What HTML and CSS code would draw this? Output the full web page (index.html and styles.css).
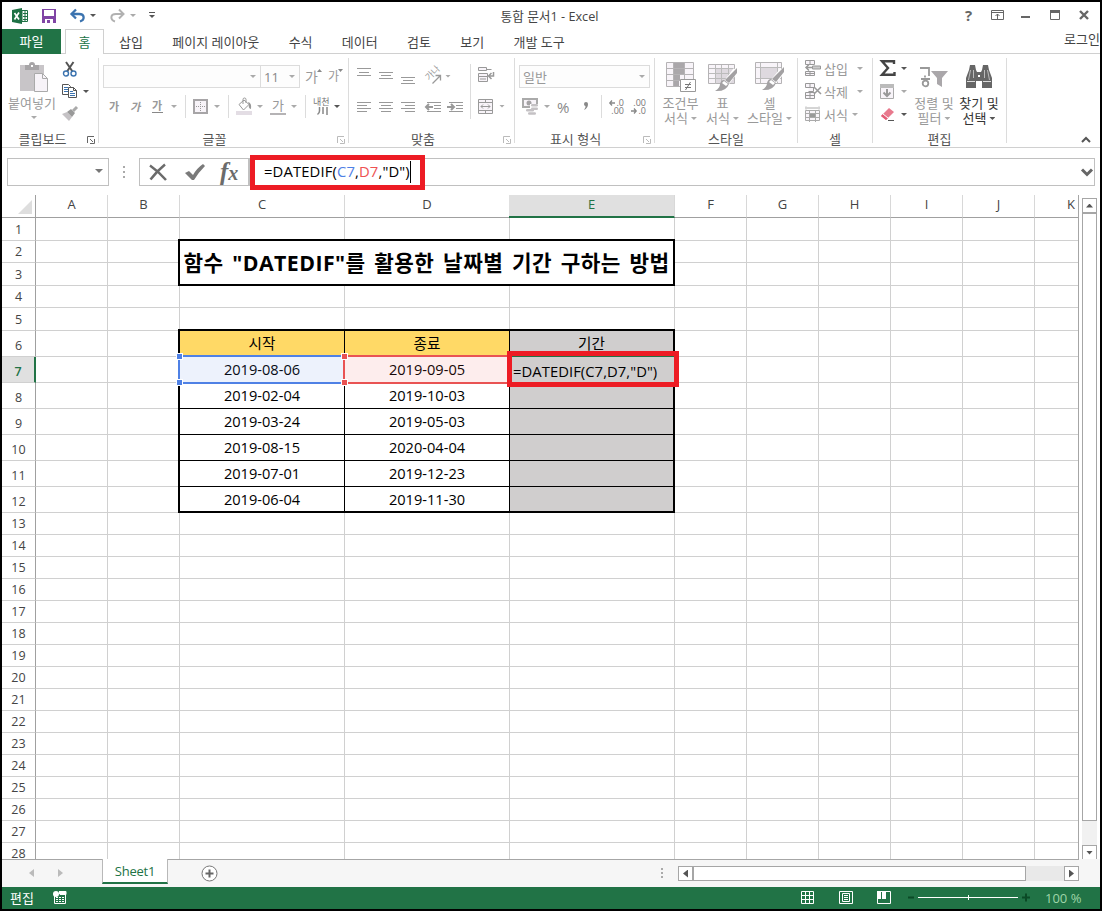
FILE: index.html
```
<!DOCTYPE html>
<html lang="ko">
<head>
    <meta charset="UTF-8">
    <meta name="viewport" content="width=device-width, initial-scale=1.0">
    <title>통합 문서1 - Excel</title>
    <link rel="stylesheet" href="styles.css">
</head>
<body>
    <div class="window">
        <!-- Title bar -->
        <header class="titlebar">
            <div class="quick-access">
                <svg width="16" height="16"><path d="M0 2L10 0V16L0 14Z" fill="#1e7145"/><path d="M10 2.500h5.500v11h-5.500z" fill="#fff" stroke="#1e7145"/><path d="M11 5.500h4M11 8.500h4M11 11.500h4M13 3v10" stroke="#1e7145"/><path d="M2.500 5L7 11.500M7 4.500L2.500 11.500" stroke="#fff" stroke-width="1.700"/></svg>
                <svg width="14" height="14"><path d="M0 0h14v14H0z" fill="#8045a5"/><path d="M2 1h10v6H2zM3 10h8v4H3z" fill="#fff"/><path d="M5 11h3v3H5z" fill="#8045a5"/></svg>
                <svg width="16" height="14"><path d="M2 5H9C15 5 15 11 10 12.500" fill="none" stroke="#3b73af" stroke-width="2.300"/><path d="M6 0.500L1.500 5L6 9.500" fill="none" stroke="#3b73af" stroke-width="2.300"/></svg>
                <i class="caret dark"></i>
                <svg width="16" height="14"><path d="M13 5H6C0 5 0 11 5 12.500" fill="none" stroke="#b1b1b1" stroke-width="2"/><path d="M9 0.500L13.500 5L9 9.500" fill="none" stroke="#b1b1b1" stroke-width="2"/></svg>
                <i class="caret"></i>
                <svg width="6" height="7"><path d="M0 .5h6" stroke="#555"/><path d="M0 3h6L3 6z" fill="#555"/></svg>
            </div>
            <div class="doc-title">통합 문서1 - Excel</div>
            <div class="window-buttons">
                <span class="help">?</span>
                <svg width="13" height="10"><path d="M.5.5h12v9H.5zM1 2.500h11M6.500 9V4M4.500 6L6.500 4L8.500 6" fill="none" stroke="#666"/></svg>
                <svg width="10" height="10"><path d="M0 6h9v2H0z" fill="#666"/></svg>
                <svg width="10" height="10"><path d="M.5.5h9v9h-9z" fill="none" stroke="#666"/><path d="M0 0h10v3H0z" fill="#666"/></svg>
                <svg width="10" height="10"><path d="M1 1L9 9M9 1L1 9" stroke="#666" stroke-width="2.400"/></svg>
            </div>
        </header>

        <!-- Ribbon tabs -->
        <nav class="tabs">
            <span class="tab-file">파일</span>
            <span class="tab-home">홈</span>
            <div class="tab-list">
                <span>삽입</span>
                <span>페이지 레이아웃</span>
                <span>수식</span>
                <span>데이터</span>
                <span>검토</span>
                <span>보기</span>
                <span>개발 도구</span>
            </div>
            <span class="login">로그인</span>
        </nav>

        <!-- Ribbon -->
        <section class="ribbon">
            <div class="group clipboard">
                <div class="group-body">
                    <div class="paste">
                        <svg width="29" height="31"><path d="M0 3h24v26H0z" fill="#c8c5c8"/><path d="M5 3h4a3 3 0 0 1 6 0h4v5H5z" fill="#a7a5a7"/><path d="M11 3h2v2h-2z" fill="#fff"/><path d="M14.500 11.500h8l5 5v13h-13z" fill="#f7f3f8" stroke="#aaa"/><path d="M22.500 11.500v5h5" fill="none" stroke="#aaa"/></svg>
                        <span>붙여넣기</span>
                        <i class="caret"></i>
                    </div>
                    <div class="clip-tools">
                        <div><svg width="16" height="15"><path d="M4 0L10.500 9.500M11.500 0L5 9.500" stroke="#555" stroke-width="2"/><circle cx="4" cy="11.500" r="2.500" fill="#fff" stroke="#3b73af" stroke-width="1.400"/><circle cx="11.500" cy="11.500" r="2.500" fill="#fff" stroke="#3b73af" stroke-width="1.400"/></svg></div>
                        <div><svg width="16" height="15"><path d="M.5.5h6l2 2v8h-8z" fill="#fff" stroke="#555"/><path d="M2 3.500h4M2 5.500h4M2 7.500h4" stroke="#3b73af"/><path d="M6.500 3.500h5l3 3v7h-8z" fill="#fff" stroke="#555"/><path d="M11.500 3.500v3h3" fill="none" stroke="#555"/><path d="M8 7.500h3M8 9.500h5M8 11.500h5" stroke="#3b73af"/></svg><i class="caret dark"></i></div>
                        <div><svg width="16" height="15"><path d="M0 7L5 5L10 10L7 14Z" fill="#c5c2c5"/><path d="M5 5L9 2L13 6L10 10Z" fill="#999"/><path d="M11 4L15 0" stroke="#aaa" stroke-width="3"/></svg></div>
                    </div>
                </div>
                <div class="group-name">클립보드</div>
                <svg class="launcher on" width="8" height="8"><path d="M.5 7V.5H7M3 3L6 6M7.500 3v4.500H3" fill="none"/></svg>
            </div>

            <div class="group font">
                <div class="row font-row1">
                    <div class="combo font-name"><i class="caret"></i></div>
                    <div class="combo font-size">11<i class="caret"></i></div>
                    <span class="grow">가<svg width="5" height="3"><path d="M0 3L2.500 0L5 3z" fill="#888"/></svg></span>
                    <span class="grow small">가<svg width="5" height="3"><path d="M0 0h5L2.500 3z" fill="#888"/></svg></span>
                </div>
                <div class="row font-row2">
                    <b>가</b>
                    <b class="italic">가</b>
                    <b class="under">가</b>
                    <i class="caret"></i>
                    <i class="sep"></i>
                    <svg width="15" height="15"><path d="M1 1h13v13H1z" fill="#f8f4f9" stroke="#a7a5a7" stroke-width="2"/><path d="M7.500 3v10M3 7.500h10" stroke="#999" stroke-dasharray="1 1"/></svg>
                    <i class="caret"></i>
                    <i class="sep"></i>
                    <svg width="17" height="17"><path d="M3 6.500L8 2L13 6.500L7.500 12Z" fill="#fff" stroke="#999"/><path d="M7 6V1.500a1.500 1.500 0 0 1 3 0V5" fill="none" stroke="#999"/><path d="M12 4q4 1 3 7q-3-1-2-4z" fill="#999"/><path d="M0 13h16v4H0z" fill="#e3dde4"/></svg>
                    <i class="caret"></i>
                    <span class="font-color">가</span>
                    <i class="caret"></i>
                    <i class="sep"></i>
                    <span class="phonetic"><span>내천</span><svg width="12" height="8"><path d="M2.500 0v4q0 2-2 3.500M6 0v7M10 0v8" fill="none" stroke="#888" stroke-width="1.500"/></svg></span>
                    <i class="caret dark"></i>
                </div>
                <div class="group-name">글꼴</div>
                <svg class="launcher" width="8" height="8"><path d="M.5 7V.5H7M3 3L6 6M7.500 3v4.500H3" fill="none"/></svg>
            </div>

            <div class="group align">
                <div class="align-left">
                    <div class="row align-row1">
                        <svg width="14" height="16"><path d="M0 .5h14M2 4.500h10M0 7.500h14"/></svg>
                        <svg width="14" height="16"><path d="M0 4.500h14M2 7.500h10M0 10.500h14"/></svg>
                        <svg width="14" height="16"><path d="M0 9.500h14M2 12.500h10M0 15.500h14"/></svg>
                        <svg width="17" height="16"><text x="0" y="0" transform="translate(4 13) rotate(-45)" class="tilt">가나</text><path d="M7.500 15.500L15 8M15.500 12.500V7.500H10.500" fill="none" stroke-width="1.300"/></svg>
                        <i class="caret"></i>
                    </div>
                    <div class="row align-row2">
                        <svg width="14" height="11"><path d="M0 .5h14M0 3.500h10M0 6.500h14M0 9.500h10"/></svg>
                        <svg width="14" height="11"><path d="M0 .5h14M2 3.500h10M0 6.500h14M2 9.500h10"/></svg>
                        <svg width="14" height="11"><path d="M0 .5h14M4 3.500h10M0 6.500h14M4 9.500h10"/></svg>
                        <svg width="16" height="11"><path d="M2 .5h14M9 3.500h7M9 6.500h7M2 9.500h14"/><path d="M1 5h7M4 2L1 5L4 8" fill="none" stroke-width="2"/></svg>
                        <svg width="16" height="11"><path d="M2 .5h14M9 3.500h7M9 6.500h7M2 9.500h14"/><path d="M0 5h6M4 2L7 5L4 8" fill="none" stroke-width="2"/></svg>
                    </div>
                </div>
                <i class="sep tall"></i>
                <div class="align-right">
                    <div><svg width="17" height="16"><path d="M.5.500h8v3h-8zM8.500 2.500h5M.5 6.500h9v3h-9zM.5 9.500h9v5h-9zM2 12h6" fill="#f8f4f9"/><path d="M15.500 5v4H11M13.500 6L10.500 9L13.500 12" fill="none" stroke-width="1.500"/></svg></div>
                    <div><svg width="15" height="15"><path d="M.5.500h14v14H.5z" fill="#f8f4f9"/><path d="M0 3.500h15M0 11.500h15M7.500 1v2M7.500 12v2M3 7.500h9M5 5.500L3 7.500L5 9.500M10 5.500L12 7.500L10 9.500" fill="none"/></svg><i class="caret"></i></div>
                </div>
                <div class="group-name">맞춤</div>
                <svg class="launcher" width="8" height="8"><path d="M.5 7V.5H7M3 3L6 6M7.500 3v4.500H3" fill="none"/></svg>
            </div>

            <div class="group number">
                <div class="row number-row1">
                    <div class="combo format">일반<i class="caret"></i></div>
                </div>
                <div class="row number-row2">
                    <svg width="17" height="17"><path d="M1 1h14v8H1z" fill="#f8f4f9" stroke="#aaa" stroke-width="2"/><circle cx="7" cy="5" r="2.500" fill="#a5a3a5"/><path d="M8 6h9v5H8z" fill="#fff"/><path d="M4 11h9v6H4z" fill="#fff"/><rect x="9" y="6" width="7" height="2.500" rx="1.200" fill="#c4c1c4"/><rect x="9" y="9.500" width="7" height="2.500" rx="1.200" fill="#c4c1c4"/><rect x="4" y="11" width="8" height="2.500" rx="1.200" fill="#c4c1c4"/><rect x="6" y="14.300" width="8" height="2.500" rx="1.200" fill="#c4c1c4"/></svg>
                    <i class="caret"></i>
                    <span class="percent">%</span>
                    <svg width="6" height="10"><path d="M1 2a2 2 0 1 1 4 0q0 4-4 6q2-3 1.500-4Q1 4 1 2z" fill="#888"/></svg>
                    <i class="sep"></i>
                    <span class="decimal"><span><svg width="6" height="6"><path d="M6 3H1M3 .5L.8 3L3 5.500" fill="none" stroke="#888" stroke-width="1.300"/></svg>.0</span><span>.00</span></span>
                    <span class="decimal"><span>.00</span><span><svg width="6" height="6"><path d="M0 3H5M3 .5L5.200 3L3 5.500" fill="none" stroke="#888" stroke-width="1.300"/></svg>.0</span></span>
                </div>
                <div class="group-name">표시 형식</div>
                <svg class="launcher" width="8" height="8"><path d="M.5 7V.5H7M3 3L6 6M7.500 3v4.500H3" fill="none"/></svg>
            </div>

            <div class="group styles">
                <div class="big-button">
                    <svg width="30" height="30"><path d="M.5.5h27v24H.5z" fill="#f8f4f9" stroke="#b5b3b5"/><path d="M8 1h10v5H8zM8 7h11v5H8zM8 13h6v5H8zM8 19h5v5H8z" fill="#aaa7aa"/><path d="M1 6.500h26M1 12.500h26M1 18.500h26M7.500 1v23M18.500 1v23" stroke="#b5b3b5"/><path d="M14.500 17.500h15v12h-15z" fill="#fff" stroke="#999"/><path d="M19 22.500h6M19 25.500h6M24.500 20L19.500 28" stroke="#777"/></svg>
                    <span>조건부</span>
                    <span>서식<i class="caret"></i></span>
                </div>
                <div class="big-button">
                    <svg width="30" height="30"><path d="M.5 2.500h26v19H.5z" fill="#f8f4f9" stroke="#b5b3b5"/><path d="M8 7h18v14H8z" fill="#ded9df"/><path d="M1 6.500h25M1 11.500h25M1 16.500h25M7.500 3v19M13.500 3v19M20.500 3v19" stroke="#bbb"/><path d="M28 8L19 20" stroke="#fff" stroke-width="6"/><path d="M29 6v5l-8 10l-4-3z" fill="#a3a1a3"/><path d="M16 18l5 4q-3 8-14 7q5-3 5-7q1-4 4-4z" fill="#a3a1a3"/><path d="M16 19l4 3l-2 2l-4-3z" fill="#fff"/></svg>
                    <span>표</span>
                    <span>서식<i class="caret"></i></span>
                </div>
                <div class="big-button">
                    <svg width="30" height="30"><path d="M.5.5h26v21H.5z" fill="#f8f4f9" stroke="#b5b3b5"/><path d="M5 6h17v10H5z" fill="#ded9df"/><path d="M1 5.500h25M1 16.500h25M5.500 1v21M22.500 1v21" stroke="#bbb"/><path d="M28 8L19 19" stroke="#fff" stroke-width="6"/><path d="M29 5v5l-8 10l-4-3z" fill="#a3a1a3"/><path d="M16 17l5 4q-3 8-14 7q5-3 5-7q1-4 4-4z" fill="#a3a1a3"/><path d="M16 18l4 3l-2 2l-4-3z" fill="#fff"/></svg>
                    <span>셀</span>
                    <span>스타일<i class="caret"></i></span>
                </div>
                <div class="group-name">스타일</div>
            </div>

            <div class="group cells">
                <div class="cell-button"><svg width="17" height="17"><path d="M.5.5h9v4h-9zM5 .5v4M.5 11.500h9v4h-9zM5 11.500v4M0 13.500h9" fill="#f8f4f9" stroke="#999"/><path d="M7.500 6h8v3h-8z" fill="#ccc" stroke="#999"/><path d="M1 7.500h6M4 4.500L1 7.500L4 10.500" fill="none" stroke="#999" stroke-width="1.500"/></svg><span>삽입</span><i class="caret"></i></div>
                <div class="cell-button"><svg width="17" height="17"><path d="M.5.5h9v4h-9zM5 .5v4M3.500 4.500h5v4h-5M.5 9.500h9v6h-9zM5 9.500v6M0 12.500h9" fill="#f8f4f9" stroke="#999"/><path d="M9 4L16 11M16 4L9 11" stroke="#999" stroke-width="1.500"/></svg><span>삭제</span><i class="caret"></i></div>
                <div class="cell-button"><svg width="17" height="17"><path d="M.5 4.500h14v10H.5z" fill="#f8f4f9" stroke="#aaa"/><path d="M0 7.500h15M0 11.500h15M4.500 4v12M10.500 4v12M1 .5v3M14 .5v3M2 2h11" stroke="#aaa"/><path d="M5 8h5v3H5z" fill="#999"/></svg><span>서식</span><i class="caret near"></i></div>
                <div class="group-name">셀</div>
            </div>

            <div class="group editing">
                <div class="edit-tools">
                    <div><svg width="16" height="17"><path d="M14 4V1.200H2L8 8L2 14.800H14.500V12" fill="none" stroke="#444" stroke-width="2.400"/></svg><i class="caret dark"></i></div>
                    <div><svg width="15" height="16"><path d="M.5.500h13v14H.5z" fill="#f8f4f9" stroke="#aaa"/><path d="M0 0h14v4H0z" fill="#bbb"/><path d="M7 5v7M3.500 8.500L7 12L10.500 8.500" fill="none" stroke="#999" stroke-width="2"/></svg><i class="caret"></i></div>
                    <div><svg width="16" height="14"><path d="M1 8L9 0L14 4L6 12Z" fill="#e8798d"/><path d="M1 8L3 6L8 10L6 12Z" fill="#e35d76"/><path d="M3 6L8 10" stroke="#fff"/><path d="M8 12.500h6" stroke="#555"/></svg><i class="caret dark"></i></div>
                </div>
                <div class="big-button sort">
                    <svg width="30" height="24"><path d="M1 2h9v8M6 9.500v2M2 13h9" fill="none" stroke="#999" stroke-width="1.800"/><circle cx="6.500" cy="17.500" r="2.800" fill="none" stroke="#999" stroke-width="1.800"/><path d="M12 5h17l-6 7v9l-5-3v-6z" fill="#aaa7aa"/></svg>
                    <span>정렬 및</span>
                    <span>필터<i class="caret"></i></span>
                </div>
                <div class="big-button find">
                    <svg width="28" height="26"><path d="M5 1h5l1 5l1 2h4l1-2l1-5h5l1 5l3 8v10H17v-7h-6v7H1V14l3-8z" fill="#666"/><path d="M5.500 6L3.500 16M8.500 6v8M19.500 6v8M22.500 6L24.500 16" stroke="#bbb" fill="none"/><path d="M2 17.500h8M18 17.500h8" stroke="#ddd"/><path d="M13 11h2v2h-2z" fill="#fff"/></svg>
                    <span>찾기 및</span>
                    <span>선택<i class="caret dark"></i></span>
                </div>
                <div class="group-name">편집</div>
            </div>
            <svg class="collapse" width="10" height="7"><path d="M1 6L5 2L9 6" fill="none" stroke="#555" stroke-width="2"/></svg>
        </section>

        <!-- Formula bar -->
        <section class="formula-bar">
            <div class="name-box"><i class="caret big"></i></div>
            <div class="dots"><i></i><i></i><i></i></div>
            <div class="formula-buttons">
                <svg width="18" height="17"><path d="M1 1.500Q9 7 17 16M16 .5Q8 7 1.500 15.500" fill="none" stroke="#6b6b6b" stroke-width="2.500"/></svg>
                <svg width="20" height="17"><path d="M0 9L4 7L8 11Q12 4 18 0L20 2Q13 9 9 16H7Z" fill="#7a7a7a"/></svg>
                <span class="fx">f<small>x</small></span>
            </div>
            <div class="formula-input">
                <div class="formula-mark">=DATEDIF(<span class="ref-c">C7</span>,<span class="ref-d">D7</span>,"D")<i class="cursor"></i></div>
                <svg width="12" height="9"><path d="M1 1.500L6 6.500L11 1.500" fill="none" stroke="#666" stroke-width="3"/></svg>
            </div>
        </section>

        <!-- Worksheet -->
        <main class="workspace">
            <div class="sheet" id="sheet"></div>
            <div class="vscroll">
                <span class="scroll-button"><i class="arrow up"></i></span>
                <span class="thumb"></span>
                <span class="track"></span>
                <span class="scroll-button"><i class="arrow down"></i></span>
            </div>
        </main>

        <!-- Sheet tabs -->
        <section class="sheet-bar">
            <div class="sheet-nav"><i class="arrow left"></i><i class="arrow right"></i></div>
            <div class="sheet-tab">Sheet1</div>
            <div class="sheet-rest">
                <svg class="add" width="17" height="17"><circle cx="8.500" cy="8.500" r="7.500" fill="#fff" stroke="#777"/><path d="M4.500 8.500h8M8.500 4.500v8" stroke="#666" stroke-width="2"/></svg>
                <div class="dots"><i></i><i></i><i></i></div>
                <div class="hscroll">
                    <span class="scroll-button"><i class="arrow left"></i></span>
                    <span class="thumb"></span>
                    <span class="track"></span>
                    <span class="scroll-button"><i class="arrow right"></i></span>
                </div>
            </div>
            <div class="sheet-end"></div>
        </section>

        <!-- Status bar -->
        <footer class="status">
            <span class="mode">편집</span>
            <svg class="macro" width="14" height="13"><path d="M1.500 4v8.500h11V3M7 .500h6v3H7z" fill="none" stroke="#fff"/><path d="M6 0h7v3H6z" fill="#fff"/><path d="M3 6.500h8M3 8.500h8M3 10.500h8" stroke="#fff" stroke-dasharray="2 1"/><circle cx="3" cy="3" r="3" fill="#fff"/></svg>
            <div class="views">
                <svg width="13" height="13"><path d="M.5.5h12v12H.5zM4.500 0v13M8.500 0v13M0 4.500h13M0 8.500h13" fill="none" stroke="#fff"/></svg>
                <svg width="14" height="13"><path d="M.5.5h13v12H.5zM3.500 2.500h7v8h-7zM5 4.500h4M5 6.500h4M5 8.500h4" fill="none" stroke="#fff"/></svg>
                <svg width="14" height="13"><path d="M.5.5h13v12H.5z" fill="none" stroke="#fff"/><path d="M0 0h4v8H0zM5 0h4v8H5z" fill="#fff"/></svg>
            </div>
            <svg class="zoom" width="124" height="9"><path d="M0 4.500h6M114 4.500h8M118 .5v8" stroke="#0b4a26" stroke-width="2"/><path d="M10 4.500h100M60.500 2v5" stroke="#fff"/></svg>
            <span class="percent-label">100 %</span>
        </footer>
    </div>
    <script src="script.js"></script>
</body>
</html>
```
FILE: styles.css
```
/* Reset */
* {
    margin: 0;
    padding: 0;
    box-sizing: border-box;
}

body {
    font-family: "Open Sans", "Noto Sans CJK KR", sans-serif;
    font-size: 13px;
    line-height: 16px;
    color: #444;
    background-color: #000;
}

svg {
    display: block;
    flex: none;
    overflow: visible;
}

span {
    white-space: nowrap;
}

.window {
    width: 1102px;
    height: 911px;
    border: 2px solid #000;
    background-color: #fff;
    display: flex;
    flex-direction: column;
    overflow: hidden;
}

.window > * {
    flex: none;
}

/* Small shared parts */
.caret {
    display: block;
    flex: none;
    width: 6px;
    height: 3px;
    background-color: #aaa;
    clip-path: polygon(0 0, 100% 0, 50% 100%);
}

.caret.dark {
    background-color: #555;
}

.caret.big {
    width: 8px;
    height: 4px;
    background-color: #777;
}

.sep {
    display: block;
    width: 1px;
    height: 23px;
    background-color: #dcdcdc;
}

.sep.tall {
    height: 55px;
}

.dots {
    display: flex;
    flex-direction: column;
    gap: 2px;
}

.dots i {
    width: 2px;
    height: 2px;
    background-color: #aaa;
}

/* Title bar */
.titlebar {
    height: 27px;
    display: grid;
    grid-template-columns: 400px 295px 1fr;
    align-items: center;
}

.quick-access {
    display: grid;
    grid-template-columns: 30px 28px 20px 20px 20px 19px 10px;
    align-items: center;
    padding-left: 10px;
}

.doc-title {
    text-align: center;
    font-size: 12.7px;
}

.window-buttons {
    display: grid;
    grid-template-columns: 27px 30px 29px 29px 10px;
    align-items: center;
    padding-left: 267px;
    margin-top: -2px;
}

.help {
    font-size: 15px;
    font-weight: bold;
    color: #666;
    padding-left: 1px;
}

/* Ribbon tabs */
.tabs {
    height: 25px;
    display: flex;
    border-bottom: 1px solid #d0d0d0;
    line-height: 25px;
}

.tab-file {
    width: 59px;
    height: 25px;
    text-align: center;
    background-color: #217346;
    color: #fff;
}

.tab-home {
    width: 39px;
    height: 25px;
    margin-left: 4px;
    text-align: center;
    color: #217346;
    background-color: #fff;
    border: 1px solid #d0d0d0;
    border-bottom: none;
    line-height: 24px;
}

.tab-list {
    display: flex;
    gap: 29.3px;
    padding-left: 15px;
    line-height: 26px;
    flex: 1;
}

.login {
    line-height: 20px;
}

/* Ribbon */
.ribbon {
    height: 94px;
    display: flex;
    border-bottom: 1px solid #d0d0d0;
    position: relative;
}

.group {
    position: relative;
    height: 85px;
    margin-top: 4px;
    border-right: 1px solid #dcdcdc;
    color: #999;
}

.group-name {
    position: absolute;
    left: 0;
    right: 18px;
    bottom: -4px;
    text-align: center;
    color: #555;
}

.launcher {
    position: absolute;
    right: 3px;
    bottom: -1px;
    stroke: #bbb;
}

.launcher.on {
    stroke: #666;
}

.row {
    display: grid;
    align-items: center;
}

.combo {
    height: 23px;
    border: 1px solid #dcdcdc;
    background-color: #fdfdfd;
    display: flex;
    align-items: center;
    justify-content: flex-end;
    padding: 0 4px 0 3px;
}

.clipboard {
    width: 97px;
}

.clipboard .group-name {
    right: 15px;
}

.group-body {
    display: flex;
}

.paste {
    width: 60px;
    display: flex;
    flex-direction: column;
    align-items: center;
    padding: 4px 0 0 4px;
}

.paste span {
    margin: 2px 0 5px -4px;
    line-height: 16px;
}

.clip-tools {
    display: grid;
    grid-template-rows: 22px 23px 23px;
}

.clip-tools div {
    display: flex;
    align-items: center;
    gap: 5px;
}

.font {
    width: 250px;
}

.font-row1 {
    grid-template-columns: 158px 44px 23px 20px;
    padding: 7px 0 0 4px;
}

.font-name {
    width: 158px;
}

.font-size {
    width: 40px;
    margin-left: -1px;
    justify-content: space-between;
    color: #888;
}

.grow {
    display: flex;
    font-size: 14px;
}

.grow svg {
    margin-left: -1px;
}

.grow.small {
    font-size: 12px;
}

.font-row2 {
    height: 23px;
    margin-top: 7px;
    grid-template-columns: 22px 21px 19px 14px 8px 21px 14px 8px 21px 13px 21px 14px 8px 21px 10px;
    padding-left: 10px;
}

.font-row2 b {
    font-size: 11px;
    width: 10px;
}

.font-row2 .italic {
    transform: skewX(-12deg);
}

.font-row2 .under {
    width: 11px;
    line-height: 12px;
    border-bottom: 1px solid #888;
}

.font-color {
    width: 16px;
    text-align: center;
    line-height: 15px;
    border-bottom: 2px solid #b5b3b5;
}

.phonetic {
    font-size: 9px;
    line-height: 8px;
    color: #777;
}

.phonetic svg {
    margin: 1px 0 0 4px;
}

.align {
    width: 166px;
    display: flex;
}

.align svg {
    stroke: #999;
}

.align .launcher {
    stroke: #bbb;
}

.align .group-name {
    right: 17px;
}

.align .sep.tall {
    margin-top: 6px;
}

.align-left {
    width: 121px;
    padding-left: 8px;
}

.align-row1 {
    grid-template-columns: 22px 22px 24px 20px 5px;
    padding-top: 10px;
}

.align .tilt {
    font-size: 9px;
    fill: #999;
    stroke: none;
}

.align-row2 {
    grid-template-columns: 22px 22px 24px 22px 16px;
    padding-top: 18px;
}

.align-right div {
    display: flex;
    align-items: center;
    gap: 6px;
    height: 31px;
    padding: 3px 0 0 7px;
}

.number {
    width: 140px;
}

.number-row1 {
    padding: 7px 4px 0;
}

.format {
    justify-content: space-between;
}

.number-row2 {
    height: 23px;
    margin-top: 7px;
    grid-template-columns: 22px 13px 26px 18px 8px 22px 18px;
    padding-left: 7px;
}

.percent {
    font-size: 15px;
    color: #888;
}

.decimal {
    font-size: 9px;
    line-height: 8px;
    color: #777;
    display: flex;
    flex-direction: column;
    align-items: flex-end;
    width: 15px;
}

.decimal span {
    display: flex;
    align-items: center;
    gap: 1px;
}

.styles {
    width: 143px;
    display: grid;
    grid-template-columns: 47px 37px 57px;
    padding-left: 2px;
}

.styles .group-name {
    right: 0;
}

.big-button {
    display: flex;
    flex-direction: column;
    align-items: center;
    padding-top: 4px;
    line-height: 15px;
}

.big-button svg {
    margin-bottom: 4px;
}

.big-button span {
    display: flex;
    align-items: center;
    gap: 3px;
}

.cells {
    width: 75px;
}

.cells .group-name {
    right: 0;
}

.cell-button {
    height: 23px;
    position: relative;
    top: -1px;
    display: flex;
    align-items: center;
    padding-left: 7px;
}

.cell-button span {
    width: 33px;
    margin-left: 2px;
}

.cell-button .near {
    margin-left: -5px;
}

.editing {
    width: 134px;
    display: flex;
}

.editing .group-name {
    right: 0;
}

.edit-tools {
    width: 38px;
    padding-left: 7px;
    margin-top: -1px;
}

.edit-tools div {
    height: 23px;
    display: grid;
    grid-template-columns: 21px 6px;
    align-items: center;
}

.sort {
    width: 46px;
}

.sort svg {
    margin: 4px 0 6px;
}

.find {
    width: 44px;
    color: #333;
}

.find svg {
    margin: 2px 0 6px;
}

.collapse {
    position: absolute;
    right: 9px;
    bottom: 4px;
}

/* Formula bar */
.formula-bar {
    height: 47px;
    display: flex;
    align-items: flex-start;
    padding: 10px 5px 0;
}

.name-box {
    width: 102px;
    height: 28px;
    border: 1px solid #c0c0c0;
    display: flex;
    align-items: center;
    justify-content: flex-end;
    padding: 0 5px 2px;
}

.formula-bar .dots {
    margin: 8px 14px 0;
    gap: 3px;
}

.formula-buttons {
    width: 110px;
    height: 28px;
    border: 1px solid #c0c0c0;
    display: grid;
    grid-template-columns: 36px 35px 20px;
    align-items: center;
    padding-left: 9px;
}

.fx {
    font-family: "Liberation Serif", serif;
    font-style: italic;
    font-weight: bold;
    font-size: 25px;
    line-height: 20px;
    color: #6b6b6b;
}

.fx small {
    font-size: 20px;
}

.formula-input {
    flex: 1;
    height: 28px;
    border: 1px solid #c0c0c0;
    display: flex;
    justify-content: space-between;
    align-items: center;
    padding-right: 1px;
}

.formula-mark {
    height: 35px;
    width: 175px;
    border: 5px solid #ed1c24;
    background-color: #fff;
    font-size: 14.8px;
    line-height: 23px;
    color: #000;
    padding-left: 9px;
    display: flex;
    white-space: nowrap;
    letter-spacing: 0.13px;
}

.ref-c {
    color: #4f81e5;
}

.ref-d {
    color: #ee5252;
}

.cursor {
    width: 1px;
    height: 22px;
    margin-top: 1px;
    background-color: #000;
}

/* Worksheet */
.workspace {
    height: 665px;
    display: flex;
}

.sheet {
    width: 1077px;
    height: 665px;
    display: grid;
    overflow: hidden;
    border-right: 1px solid #a6a6a6;
    border-bottom: 1px solid #a6a6a6;
}

.cell {
    border-right: 1px solid #d0d0d0;
    border-bottom: 1px solid #d0d0d0;
}

.cell.last {
    border-right: none;
}

.col-head,
.row-head,
.corner {
    display: flex;
    justify-content: center;
    border-right: 1px solid #d8d8d8;
    border-bottom: 1px solid #d0d0d0;
    color: #444;
}

.col-head,
.corner {
    border-bottom-color: #a0a0a0;
    line-height: 19px;
}

.col-head.last {
    border-right: none;
    justify-content: flex-end;
    padding-right: 3px;
}

.row-head {
    align-items: flex-end;
    line-height: 20px;
    border-right-color: #a0a0a0;
    font-size: 12.5px;
}

.corner {
    border-right-color: #a0a0a0;
    justify-content: flex-end;
    padding: 5px 3px 0 0;
}

.corner i {
    width: 14px;
    height: 14px;
    background-color: #dedede;
    clip-path: polygon(100% 0, 100% 100%, 0 100%);
}

.col-head.active {
    background-color: #e0e0e0;
    color: #217346;
    border-bottom: 2px solid #217346;
    margin-left: -1px;
}

.row-head.active {
    background-color: #e0e0e0;
    color: #217346;
    border-right: 2px solid #217346;
    font-weight: 600;
}

.title-cell {
    margin: -2px 0 0 -2px;
    border: 2px solid #000;
    background-color: #fff;
    color: #000;
    font-size: 21.3px;
    font-weight: bold;
    letter-spacing: 0.45px;
    word-spacing: 2.7px;
    display: flex;
    align-items: center;
    justify-content: center;
    white-space: nowrap;
}

.data-table {
    margin: -2px 0 0 -2px;
    border: 2px solid #000;
    display: grid;
    grid-template-columns: 165px 165px 163px;
    grid-template-rows: 26px 26px 26px 26px 26px 26px 24px;
    background-color: #fff;
    color: #000;
    font-size: 14.6px;
    position: relative;
}

.data-table > div {
    display: flex;
    align-items: center;
    justify-content: center;
    border-right: 1px solid #000;
    border-bottom: 1px solid #000;
    padding-bottom: 2px;
}

.data-table > div:nth-child(3n) {
    border-right: none;
    background-color: #d0cece;
}

.data-table > .head {
    background-color: #ffd966;
}

.data-table > .end {
    border-bottom: none;
    padding-bottom: 0;
}

/* Coloured frames round the referenced cells */
.range {
    margin: -2px 0 -1px -2px;
    border: 2px solid #4f81e5;
    position: relative;
}

.range.c7 {
    background-color: rgba(79, 129, 229, 0.1);
    border-right: none;
}

.range.d7 {
    background-color: rgba(238, 82, 82, 0.1);
    border-color: #e95353;
    border-right: none;
    margin-right: 3px;
}

.range i {
    position: absolute;
    left: -4px;
    width: 7px;
    height: 7px;
    border: 1px solid #fff;
    background-color: #4f81e5;
}

.range.d7 i {
    background-color: #e95353;
}

.range i:first-child {
    top: -4px;
}

.range i:last-child {
    bottom: -4px;
}

.edit-cell {
    margin: -6px -4px -4px -3px;
    border: 5px solid #ed1c24;
    background-color: #d0cece;
    color: #000;
    font-size: 14.8px;
    line-height: 30px;
    letter-spacing: 0.05px;
    padding-left: 1px;
    white-space: nowrap;
    position: relative;
    box-shadow: inset 0 1px 0 #217346;
}

/* Scroll bars */
.scroll-button,
.thumb {
    border: 1px solid #a6a6a6;
    background-color: #fff;
}

.scroll-button {
    width: 15px;
    height: 15px;
    display: flex;
    align-items: center;
    justify-content: center;
    flex: none;
}

.arrow {
    display: block;
    width: 7px;
    height: 4px;
    background-color: #555;
}

.arrow.up {
    clip-path: polygon(50% 0, 100% 100%, 0 100%);
}

.arrow.down {
    clip-path: polygon(0 0, 100% 0, 50% 100%);
}

.arrow.left,
.arrow.right {
    width: 5px;
    height: 8px;
    clip-path: polygon(100% 0, 100% 100%, 0 50%);
}

.arrow.right {
    clip-path: polygon(0 0, 100% 50%, 0 100%);
}

.vscroll {
    width: 15px;
    margin: 3px 0 0 3px;
    display: flex;
    flex-direction: column;
}

.vscroll .thumb {
    height: 608px;
}

.vscroll .track {
    flex: 1;
    background-color: #f1f1f1;
}

/* Sheet tabs */
.sheet-bar {
    height: 28px;
    margin-top: -1px;
    display: flex;
    background-color: #f6f6f6;
    position: relative;
}

.sheet-nav {
    width: 100px;
    border-top: 1px solid #a6a6a6;
    display: flex;
    gap: 24px;
    padding: 9px 0 0 27px;
}

.sheet-nav .arrow {
    background-color: #bbb;
}

.sheet-tab {
    width: 66px;
    height: 25px;
    background-color: #fff;
    border: 1px solid #b8b8b8;
    border-top: none;
    border-bottom: 2px solid #217346;
    color: #217346;
    text-align: center;
    line-height: 25px;
    letter-spacing: -0.2px;
}

.sheet-rest {
    flex: 1;
    border-top: 1px solid #a6a6a6;
    display: flex;
    align-items: flex-start;
}

.sheet-end {
    width: 21px;
}

.add {
    margin: 5px 0 0 33px;
}

.sheet-rest .dots {
    margin: 8px 0 0 443px;
    gap: 2px;
}

.hscroll {
    display: flex;
    width: 401px;
    margin: 6px 0 0 auto;
}

.hscroll .thumb {
    width: 333px;
}

.hscroll .track {
    flex: 1;
    background-color: #e9e9e9;
}

/* Status bar */
.status {
    height: 22px;
    background-color: #217346;
    color: #fff;
    display: flex;
    align-items: center;
    padding-left: 8px;
}

.mode {
    width: 43px;
}

.status svg {
    margin-top: -1px;
}

.views {
    display: flex;
    gap: 24.5px;
    margin-left: 734px;
}

.zoom {
    margin-left: 17px;
}

.percent-label {
    margin-left: 13px;
    color: #9fd5a9;
}
```
FILE: script.js
```
const sheet = document.getElementById('sheet');

// Column widths and row heights in pixels, grid line included
const columns = { A: 72, B: 72, C: 165, D: 165, E: 165, F: 72, G: 72, H: 72, I: 72, J: 72, K: 43 };
const rows = [23, 22, 23, 22, 23, 26, 26, 26, 26, 26, 26, 26];
while (rows.length < 28) {
    rows.push(22);
}

const dates = [
    ['2019-08-06', '2019-09-05'],
    ['2019-02-04', '2019-10-03'],
    ['2019-03-24', '2019-05-03'],
    ['2019-08-15', '2020-04-04'],
    ['2019-07-01', '2019-12-23'],
    ['2019-06-04', '2019-11-30']
];

function add(parent, className, text, area) {
    const div = document.createElement('div');
    div.className = className;
    div.textContent = text;
    if (area) {
        div.style.gridArea = area;
    }
    parent.appendChild(div);
    return div;
}

const names = Object.keys(columns);
sheet.style.gridTemplateColumns = '34px ' + names.map(n => columns[n] + 'px').join(' ');
sheet.style.gridTemplateRows = '23px ' + rows.map(h => h + 'px').join(' ');

// Headers and empty cells
add(sheet, 'corner', '', '1 / 1').innerHTML = '<i></i>';
names.forEach((name, c) => {
    const extra = name === 'E' ? ' active' : name === 'K' ? ' last' : '';
    add(sheet, 'col-head' + extra, name, `1 / ${c + 2}`);
});
rows.forEach((height, r) => {
    add(sheet, 'row-head' + (r === 6 ? ' active' : ''), r + 1, `${r + 2} / 1`);
    names.forEach((name, c) => {
        add(sheet, 'cell' + (name === 'K' ? ' last' : ''), '', `${r + 2} / ${c + 2}`);
    });
});

// Sheet content
add(sheet, 'title-cell', '함수 "DATEDIF"를 활용한 날짜별 기간 구하는 방법', '3 / 4 / 5 / 7');

const table = add(sheet, 'data-table', '', '7 / 4 / 14 / 7');
['시작', '종료', '기간'].forEach(text => add(table, text === '기간' ? '' : 'head', text));
dates.forEach((pair, i) => {
    const end = i === dates.length - 1 ? 'end' : '';
    [...pair, ''].forEach(text => add(table, end, text));
});

add(sheet, 'range c7', '', '8 / 4').innerHTML = '<i></i><i></i>';
add(sheet, 'range d7', '', '8 / 5').innerHTML = '<i></i><i></i>';
add(sheet, 'edit-cell', '=DATEDIF(C7,D7,"D")', '8 / 6');
```
